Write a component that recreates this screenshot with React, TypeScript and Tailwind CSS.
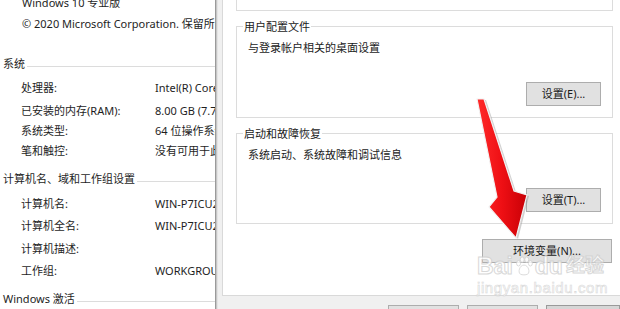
import React from "react";

function Row({ label, value, mt }: { label: string; value: string; mt: string }) {
  return (
    <div className={`${mt} h-[20px] flex items-center pl-[21px]`}>
      <div className="w-[134px] shrink-0">{label}</div>
      <div>{value}</div>
    </div>
  );
}

function Heading({ title, mt }: { title: string; mt: string }) {
  return (
    <div className={`${mt} h-[20px] flex items-center pl-[3px]`}>
      <span>{title}</span>
      <div className="flex-1 h-px bg-[#dcdcdc] ml-[2px] mt-[5px]" />
    </div>
  );
}

function Button({ children, w }: { children: React.ReactNode; w: string }) {
  return (
    <div
      className={`${w} h-[24px] flex items-center justify-center bg-[#e1e1e1] border border-[#adadad] text-[11px] text-[#1a1a1a]`}
    >
      {children}
    </div>
  );
}

function GroupBox({
  title,
  desc,
  btn,
  h,
}: {
  title: string;
  desc: string;
  btn: string;
  h: string;
}) {
  return (
    <div className={`w-[377px] ${h} border border-t-0 border-[#dcdcdc] bg-white flex flex-col`}>
      <div className="flex items-center h-[1px] overflow-visible">
        <div className="w-[6px] h-px bg-[#dcdcdc]" />
        <div className="px-[1px] text-[11px] leading-[14px] text-[#1a1a1a]">{title}</div>
        <div className="flex-1 h-px bg-[#dcdcdc]" />
      </div>
      <div className="mt-[14px] ml-[11px] text-[11px] leading-[14px] text-[#1a1a1a]">{desc}</div>
      <div className="mt-auto mb-[11px] self-end mr-[11px]">
        <Button w="w-[75px]">{btn}</Button>
      </div>
    </div>
  );
}

export default function App() {
  return (
    <div className="relative w-[620px] h-[309px] overflow-hidden flex bg-white font-['Noto_Sans','Noto_Sans_CJK_SC',sans-serif] text-[11px] leading-[14px] text-[#1e1e1e]">
      {/* Left: system properties page */}
      <div className="w-[215px] shrink-0 overflow-hidden whitespace-nowrap bg-white">
        <div className="mt-[-7px] h-[20px] flex items-center pl-[22px]">Windows 10 专业版</div>
        <div className="mt-[1px] h-[20px] flex items-center pl-[22px]">
          © 2020 Microsoft Corporation. 保留所有
        </div>
        <Heading title="系统" mt="mt-[20px]" />
        <Row mt="mt-[4px]" label="处理器:" value="Intel(R) Core" />
        <Row mt="mt-[3px]" label="已安装的内存(RAM):" value="8.00 GB (7.7" />
        <Row mt="mt-[0px]" label="系统类型:" value="64 位操作系统" />
        <Row mt="mt-[0px]" label="笔和触控:" value="没有可用于此" />
        <Heading title="计算机名、域和工作组设置" mt="mt-[8px]" />
        <Row mt="mt-[5px]" label="计算机名:" value="WIN-P7ICU2" />
        <Row mt="mt-[2px]" label="计算机全名:" value="WIN-P7ICU2" />
        <Row mt="mt-[3px]" label="计算机描述:" value="" />
        <Row mt="mt-[2px]" label="工作组:" value="WORKGROUP" />
        <Heading title="Windows 激活" mt="mt-[8px]" />
      </div>

      {/* Window edge */}
      <div className="w-[1px] shrink-0 bg-[#9a9a9a]" />
      <div className="w-[1px] shrink-0 bg-[#c6c6c6]" />
      <div className="w-[1px] shrink-0 bg-[#e4e4e4]" />

      {/* Dialog */}
      <div className="flex-1 bg-[#f0f0f0] flex flex-col overflow-hidden">
        <div className="ml-[4px] w-[420px] h-[296px] shrink-0 bg-white border-l border-b border-[#d9d9d9] pl-[13px] flex flex-col">
          <div className="w-[377px] h-[11px] border border-t-0 border-[#dcdcdc] bg-white" />
          <div className="mt-[15px]">
            <GroupBox
              title="用户配置文件"
              desc="与登录帐户相关的桌面设置"
              btn="设置(E)..."
              h="h-[92px]"
            />
          </div>
          <div className="mt-[15px]">
            <GroupBox
              title="启动和故障恢复"
              desc="系统启动、系统故障和调试信息"
              btn="设置(T)..."
              h="h-[91px]"
            />
          </div>
          <div className="mt-[15px] ml-[246px]">
            <Button w="w-[130px]">环境变量(N)...</Button>
          </div>
        </div>
        <div className="mt-[9px] ml-[170px] flex gap-[8px]">
          <div className="w-[77px] h-[24px] bg-[#e1e1e1] border border-[#adadad]" />
          <div className="w-[76px] h-[24px] bg-[#e1e1e1] border border-[#adadad]" />
          <div className="w-[80px] h-[24px] bg-[#d6d6d6] border border-[#9a9a9a]" />
        </div>
      </div>

      {/* Baidu watermark */}
      <div className="absolute left-[477px] top-[254px] flex flex-col items-start pointer-events-none text-white opacity-80">
        <div className="flex items-center text-[23px] leading-[24px] font-bold font-['Liberation_Sans','Noto_Sans_CJK_SC',sans-serif] [-webkit-text-stroke:1px_#cfcfcf]">
          <span>Bai</span>
          <svg width="20" height="20" viewBox="0 0 22 22" className="mx-[1px]">
            <g fill="white" stroke="#cfcfcf" strokeWidth="1">
              <ellipse cx="5" cy="8" rx="2.2" ry="3" />
              <ellipse cx="9" cy="4" rx="2.2" ry="3" />
              <ellipse cx="14" cy="4" rx="2.2" ry="3" />
              <ellipse cx="18" cy="8" rx="2.2" ry="3" />
              <path d="M11 10 C6 10 4 18 7 20 C9 21 13 21 15 20 C18 18 16 10 11 10 Z" />
            </g>
          </svg>
          <span>du</span>
          <span className="ml-[3px] text-[19px]">经验</span>
        </div>
        <div className="mt-[2px] text-[15px] leading-[16px] tracking-[0.6px] font-['Liberation_Sans',sans-serif] [-webkit-text-stroke:0.6px_#cfcfcf]">
          jingyan.baidu.com
        </div>
      </div>

      {/* Red annotation arrow */}
      <svg
        className="absolute left-0 top-0 pointer-events-none"
        width="620"
        height="309"
        viewBox="0 0 620 309"
      >
        <defs>
          <linearGradient id="ar" x1="0" y1="0" x2="1" y2="0">
            <stop offset="0" stopColor="#ff2a2a" />
            <stop offset="0.5" stopColor="#ee0f14" />
            <stop offset="1" stopColor="#c80006" />
          </linearGradient>
        </defs>
        <polygon
          points="477,99 497,197 489,207 516,238 527,195 514,191 484,99"
          fill="#9a9a9a"
          opacity="0.45"
          transform="translate(2,1)"
        />
        <polygon
          points="477,99 497,197 489,207 516,238 527,195 514,191 484,99"
          fill="url(#ar)"
          stroke="#f2f2f2"
          strokeWidth="1.2"
          strokeLinejoin="miter"
        />
      </svg>
    </div>
  );
}
